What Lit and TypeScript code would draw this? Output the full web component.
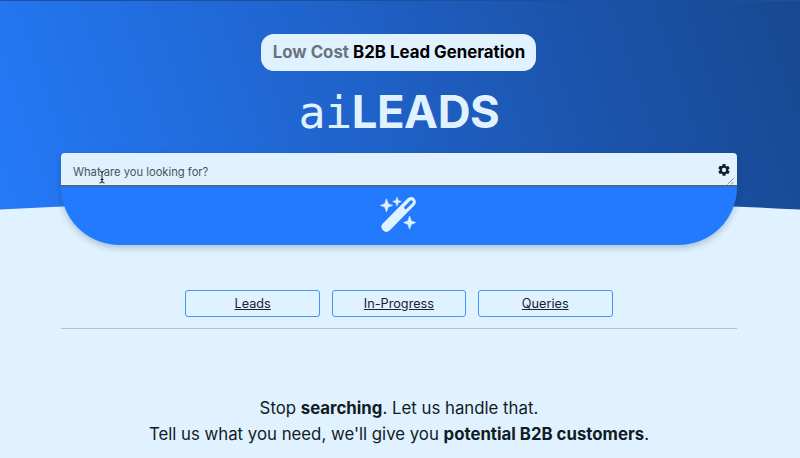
import { LitElement, html, css } from "lit";
import { customElement } from "lit/decorators.js";

@customElement("app-root")
export class AppRoot extends LitElement {
  static styles = css`
    :host {
      display: block;
      position: relative;
      height: 458px;
      overflow: hidden;
      background: #e0f2ff;
      color: #121c24;
      font-family: Inter, "Noto Sans", sans-serif;
    }
    * { box-sizing: border-box; }
    .hero {
      position: absolute;
      inset: 0 0 auto;
      height: 210px;
      background: linear-gradient(72deg, #2579f8 0%, #2065cf 40%, #1c55ae 70%, #184890 100%);
      border-top: 1px solid #1c4f9c;
      clip-path: path("M0 0H800V209.5Q400 189.5 0 209.5Z");
    }
    .page {
      position: relative;
      width: 675.5px;
      margin-left: 61.2px;
      padding-top: 34px;
      display: flex;
      flex-direction: column;
      align-items: center;
    }
    .badge {
      height: 37px;
      width: 275px;
      line-height: 37px;
      text-align: center;
      white-space: nowrap;
      border-radius: 13px;
      background: #e0f2ff;
      color: #000;
      font-size: 16.85px;
      font-weight: 700;
    }
    .muted { color: #69747e; }
    .logo {
      margin: 13px 0 0;
      height: 56px;
      line-height: 56px;
      display: flex;
      align-items: baseline;
      color: #e0f2ff;
      font-size: 45.5px;
      font-weight: 700;
      letter-spacing: -0.45px;
    }
    .mono {
      font-family: "DejaVu Sans Mono", monospace;
      font-weight: 400;
      font-size: 45px;
      letter-spacing: -0.5px;
    }
    .search {
      width: 100%;
      margin-top: 13px;
      border-radius: 4px 4px 58px 58px;
      box-shadow: 0 3px 6px rgba(20, 50, 80, 0.25);
    }
    .field {
      position: relative;
      height: 32px;
      padding: 0 7px 0 11.8px;
      display: flex;
      justify-content: space-between;
      border-radius: 4px 4px 0 0;
      background: #e0f2ff;
    }
    .placeholder { font-size: 11.2px; line-height: 38px; color: #48535b; }
    .gear { width: 12px; height: 12px; margin-top: 11px; }
    .grip { position: absolute; right: 3px; bottom: 0; width: 7px; height: 7px; }
    .cursor { position: absolute; left: 36.8px; top: 17px; width: 8px; height: 14px; }
    .go {
      height: 60px;
      display: flex;
      justify-content: center;
      align-items: center;
      border-radius: 0 0 58px 58px;
      background: linear-gradient(#59616d 0 1px, #3f6dab 1px 2px, #247aff 2px);
    }
    .wand { width: 38px; height: 38px; }
    .tabs { margin-top: 45px; display: flex; gap: 11.5px; }
    .tab {
      width: 134.8px;
      height: 27px;
      line-height: 25px;
      text-align: center;
      border: 1px solid #4394fa;
      border-radius: 3px;
      font-size: 12.7px;
      text-decoration: underline;
      color: #18232d;
    }
    .rule { width: 100%; height: 1px; margin-top: 11px; background: #b3c2cd; }
    .pitch {
      margin: 66px 0 0;
      text-align: center;
      font-size: 16.8px;
      line-height: 26px;
      white-space: nowrap;
    }
  `;

  render() {
    return html`
      <div class="hero"></div>
      <main class="page">
        <div class="badge"><span class="muted">Low Cost</span> B2B Lead Generation</div>
        <h1 class="logo"><span class="mono">ai</span><span>LEADS</span></h1>
        <div class="search">
          <div class="field">
            <span class="placeholder">What are you looking for?</span>
            <svg class="gear" viewBox="2 2 20 20" fill="#121c24">
              <path d="M19.14 12.94c.04-.3.06-.61.06-.94s-.02-.64-.07-.94l2.03-1.58a.49.49 0 0 0 .12-.61l-1.92-3.32a.49.49 0 0 0-.59-.22l-2.39.96a7 7 0 0 0-1.62-.94l-.36-2.54A.48.48 0 0 0 13.92 2h-3.84a.48.48 0 0 0-.47.41l-.36 2.54c-.59.24-1.13.57-1.62.94l-2.39-.96a.49.49 0 0 0-.59.22L2.74 8.87a.48.48 0 0 0 .12.61l2.03 1.58a7 7 0 0 0 0 1.88l-2.03 1.58a.49.49 0 0 0-.12.61l1.92 3.32c.12.22.37.29.59.22l2.39-.96c.5.38 1.03.7 1.62.94l.36 2.54c.05.24.24.41.48.41h3.84c.24 0 .44-.17.47-.41l.36-2.54a7 7 0 0 0 1.62-.94l2.39.96c.22.08.47 0 .59-.22l1.92-3.32a.48.48 0 0 0-.12-.61zM12 15.6a3.6 3.6 0 1 1 0-7.2 3.6 3.6 0 0 1 0 7.2z" />
            </svg>
            <svg class="grip" viewBox="0 0 7 7" stroke="#66727b" stroke-width="0.8">
              <path d="M0.5 6.5L6.5 0.5M4 6.5L6.5 4" />
            </svg>
            <svg class="cursor" viewBox="0 0 8 14" fill="none" stroke="#111a20">
              <path d="M1.5 1Q4 1 4 3V11Q4 13 1.5 13M6.5 1Q4 1 4 3M6.5 13Q4 13 4 11M2.5 9.5H5.5" />
            </svg>
          </div>
          <div class="go">
            <svg class="wand" viewBox="0 0 38 38" fill="#e0f2ff">
              <path fill-rule="evenodd" d="M27.5 2.6a4.8 4.8 0 0 1 7 6.700L9.600 34.500a4.900 4.900 0 0 1-7-6.800zM30.200 4.800L24.600 10.500a1.500 1.500 0 0 0 2.200 2.100L32.400 6.900a1.500 1.500 0 0 0-2.200-2.100z" />
              <path d="M6.5 2.8L8.2 7.700 12.6 9.400 8.200 11.100 6.500 16 4.800 11.100.4 9.400 4.800 7.700z" stroke="#e0f2ff" stroke-width="0.6" stroke-linejoin="round" />
              <path d="M17 1L18.200 4.400 21.300 5.600 18.200 6.800 17 10.200 15.800 6.800 12.700 5.600 15.800 4.400z" stroke="#e0f2ff" stroke-width="0.5" stroke-linejoin="round" />
              <path d="M29.600 20L31.300 24.900 35.700 26.600 31.300 28.300 29.600 33.200 27.900 28.300 23.500 26.600 27.900 24.900z" stroke="#e0f2ff" stroke-width="0.6" stroke-linejoin="round" />
            </svg>
          </div>
        </div>
        <nav class="tabs">
          ${["Leads", "In-Progress", "Queries"].map((t) => html`<a class="tab">${t}</a>`)}
        </nav>
        <div class="rule"></div>
        <p class="pitch">
          Stop <b>searching</b>. Let us handle that.<br />
          Tell us what you need, we'll give you <b>potential B2B customers</b>.
        </p>
      </main>
    `;
  }
}
